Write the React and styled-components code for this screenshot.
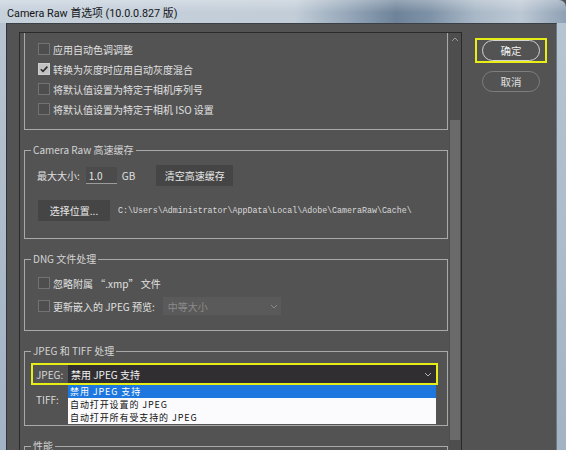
import React from "react";
import styled, { createGlobalStyle } from "styled-components";

const Global = createGlobalStyle`
  html, body { margin: 0; padding: 0; background: #535353; }
  body { width: 566px; height: 450px; overflow: hidden; }
  * { box-sizing: border-box; }
`;

const CJK = `"Noto Sans CJK SC", "Noto Sans", sans-serif`;

const Window = styled.div`
  width: 566px;
  height: 450px;
  display: flex;
  flex-direction: column;
  overflow: hidden;
  font-family: ${CJK};
  font-size: 10px;
  color: #dedede;
`;

const TitleBar = styled.div`
  height: 23px;
  flex: none;
  display: flex;
  align-items: center;
  padding-left: 7px;
  border-top-right-radius: 7px;
  background:
    linear-gradient(180deg, rgba(255,255,255,0.28) 0%, rgba(255,255,255,0) 55%),
    linear-gradient(90deg, #c6d1dc 0%, #c2cdd8 52%, #93a5b7 62%, #6e8399 70%, #7e92a7 76%, #a9b8c7 84%, #bcc8d4 92%, #8fa1b4 100%);
  font-family: Roboto, "Noto Sans CJK SC", sans-serif;
  font-size: 10.8px;
  color: #151515;
`;

const Frame = styled.div`
  flex: 1;
  min-height: 0;
  display: flex;
  padding: 0 9px 0 6px;
  background: linear-gradient(180deg, #b7c4d1 0%, #a3b3c4 100%);
`;

const Client = styled.div`
  flex: 1;
  display: flex;
  align-items: flex-start;
  overflow: hidden;
  background: #535353;
  border-top: 1px solid #3b4046;
  border-left: 1px solid #30353a;
  border-right: 1px solid #6c7a88;
  padding: 8px 0 0 12px;
`;

const ScrollPanel = styled.div`
  flex: none;
  width: 443px;
  height: 440px;
  display: flex;
  border: 1px solid #2a2a2a;
  background: #535353;
`;

const Viewport = styled.div`
  flex: 1;
  min-width: 0;
  overflow: hidden;
  padding: 0 1px 0 4px;
  display: flex;
  flex-direction: column;
`;

const Group = styled.fieldset`
  margin: ${(p) => (p.$cut ? "0" : "13px 0 0 0")};
  padding: 0;
  min-width: 0;
  border: 1px solid #a9a9a9;
  border-top: ${(p) => (p.$cut ? "none" : "1px solid #a9a9a9")};
`;

const Legend = styled.legend`
  margin-left: 6px;
  padding: 0 2px;
  font-size: 10px;
  line-height: 14px;
  color: #d4d4d4;
`;

const GroupBody = styled.div`
  padding: ${(p) => p.$pad};
  display: flex;
  flex-direction: column;
`;

const Row = styled.div`
  display: flex;
  align-items: center;
  height: ${(p) => p.$h || 20}px;
  margin-top: ${(p) => p.$mt || 0}px;
  flex: none;
`;

const Box = styled.span`
  width: 12px;
  height: 12px;
  flex: none;
  display: flex;
  align-items: center;
  justify-content: center;
  border: 1px solid ${(p) => (p.$checked ? "#cfcfcf" : "#737373")};
  background: ${(p) => (p.$checked ? "#c2c2c2" : "#4e4e4e")};
`;

const RowText = styled.span`
  margin-left: 3px;
  white-space: nowrap;
  color: #e0e0e0;
`;

const CheckRow = ({ checked, children, $mt }) => (
  <Row $mt={$mt}>
    <Box $checked={checked}>
      {checked && (
        <svg width="10" height="10" viewBox="0 0 10 10">
          <path d="M1.8 5.2 L4 7.4 L8.4 2.6" fill="none" stroke="#2a2a2a" strokeWidth="1.6" />
        </svg>
      )}
    </Box>
    <RowText>{children}</RowText>
  </Row>
);

const Label = styled.span`
  white-space: nowrap;
  color: ${(p) => p.$color || "#e0e0e0"};
  margin-left: ${(p) => p.$ml || 0}px;
`;

const SizeInput = styled.span`
  width: 31px;
  height: 17px;
  margin-left: 6px;
  display: flex;
  align-items: center;
  padding-left: 3px;
  background: #4b4b4b;
  border-bottom: 1px solid #9c9c9c;
  color: #e4e4e4;
`;

const FlatButton = styled.span`
  width: ${(p) => p.$w}px;
  height: 21px;
  margin-left: ${(p) => p.$ml || 0}px;
  flex: none;
  display: flex;
  align-items: center;
  justify-content: center;
  background: #454545;
  color: #e8e8e8;
  white-space: nowrap;
`;

const PathText = styled.span`
  margin-left: 8px;
  font-family: "Liberation Mono", monospace;
  font-size: 8.3px;
  color: #dadada;
  white-space: nowrap;
`;

const Chevron = ({ color }) => (
  <svg width="8" height="5" viewBox="0 0 8 5">
    <path d="M1 1 L4 4 L7 1" fill="none" stroke={color} strokeWidth="1" />
  </svg>
);

const DisabledSelect = styled.span`
  width: 118px;
  height: 18px;
  margin-left: 8px;
  display: flex;
  align-items: center;
  justify-content: space-between;
  padding: 0 3px 0 5px;
  background: #5a5a5a;
  color: #8a8a8a;
`;

const HighlightRow = styled.div`
  position: relative;
  display: flex;
  align-items: stretch;
  height: 22px;
  border: 2px solid #e6ee16;
`;

const JpegLabel = styled.span`
  width: 35px;
  flex: none;
  padding-left: 3px;
  display: flex;
  align-items: center;
  color: #d8d8d8;
`;

const DarkSelect = styled.div`
  position: relative;
  flex: 1;
  display: flex;
  align-items: center;
  justify-content: space-between;
  padding: 0 4px 0 3px;
  background: #302e30;
  color: #f2f2f2;
`;

const DropList = styled.ul`
  position: absolute;
  top: calc(100% + 2px);
  left: 0;
  right: 0;
  margin: 0;
  padding: 0;
  list-style: none;
  background: #fbfbfd;
  z-index: 2;
`;

const DropItem = styled.li`
  height: 13px;
  line-height: 13px;
  padding-left: 2px;
  font-size: 9px;
  letter-spacing: 0.9px;
  white-space: nowrap;
  overflow: hidden;
  color: ${(p) => (p.$sel ? "#ffffff" : "#111111")};
  background: ${(p) => (p.$sel ? "#1d77de" : "transparent")};
`;

const Scrollbar = styled.div`
  width: 12px;
  flex: none;
  display: flex;
  flex-direction: column;
  background: #4e4e4e;
`;

const ScrollArrow = styled.div`
  height: 12px;
  display: flex;
  align-items: center;
  justify-content: center;
`;

const Thumb = styled.div`
  margin: 75px 1px 0 1px;
  height: 320px;
  background: #6a6a6a;
`;

const ButtonColumn = styled.div`
  display: flex;
  flex-direction: column;
  align-items: flex-start;
  margin: 6px 0 0 13px;
`;

const Focus = styled.div`
  border: 2px solid #e6ee16;
  padding: 0 5px;
  height: 25px;
`;

const Capsule = styled.div`
  width: 58px;
  height: 21px;
  border-radius: 11px;
  border: 1px solid ${(p) => (p.$primary ? "#d4d4d4" : "#7e7e7e")};
  display: flex;
  align-items: center;
  justify-content: center;
  color: ${(p) => (p.$primary ? "#f0f0f0" : "#e0e0e0")};
  font-size: 10.5px;
  margin: ${(p) => p.$m || 0};
`;

export default function App() {
  return (
    <>
      <Global />
      <Window>
        <TitleBar>Camera Raw 首选项 (10.0.0.827 版)</TitleBar>
        <Frame>
          <Client>
            <ScrollPanel>
              <Viewport>
                <Group $cut>
                  <GroupBody $pad="6px 9px 10px 13px">
                    <CheckRow>应用自动色调调整</CheckRow>
                    <CheckRow checked>转换为灰度时应用自动灰度混合</CheckRow>
                    <CheckRow>将默认值设置为特定于相机序列号</CheckRow>
                    <CheckRow>将默认值设置为特定于相机 ISO 设置</CheckRow>
                  </GroupBody>
                </Group>

                <Group>
                  <Legend>Camera Raw 高速缓存</Legend>
                  <GroupBody $pad="8px 9px 17px 12px">
                    <Row $h={21}>
                      <Label>最大大小:</Label>
                      <SizeInput>1.0</SizeInput>
                      <Label $ml={5}>GB</Label>
                      <FlatButton $w={77} $ml={21}>清空高速缓存</FlatButton>
                    </Row>
                    <Row $h={21} $mt={14}>
                      <FlatButton $w={72} $ml={1}>选择位置...</FlatButton>
                      <PathText>C:\Users\Administrator\AppData\Local\Adobe\CameraRaw\Cache\</PathText>
                    </Row>
                  </GroupBody>
                </Group>

                <Group>
                  <Legend>DNG 文件处理</Legend>
                  <GroupBody $pad="7px 9px 14px 13px">
                    <CheckRow>忽略附属 “.xmp” 文件</CheckRow>
                    <Row $mt={3}>
                      <Box />
                      <RowText>更新嵌入的 JPEG 预览:</RowText>
                      <DisabledSelect>
                        <span>中等大小</span>
                        <Chevron color="#8a8a8a" />
                      </DisabledSelect>
                    </Row>
                  </GroupBody>
                </Group>

                <Group>
                  <Legend>JPEG 和 TIFF 处理</Legend>
                  <GroupBody $pad="5px 9px 17px 6px">
                    <HighlightRow>
                      <JpegLabel>JPEG:</JpegLabel>
                      <DarkSelect>
                        <span>禁用 JPEG 支持</span>
                        <Chevron color="#b0b0b0" />
                        <DropList>
                          <DropItem $sel>禁用 JPEG 支持</DropItem>
                          <DropItem>自动打开设置的 JPEG</DropItem>
                          <DropItem>自动打开所有受支持的 JPEG</DropItem>
                        </DropList>
                      </DarkSelect>
                    </HighlightRow>
                    <Row $h={18} $mt={5}>
                      <Label $ml={5} $color="#d8d8d8">TIFF:</Label>
                    </Row>
                  </GroupBody>
                </Group>

                <Group>
                  <Legend>性能</Legend>
                  <GroupBody $pad="8px 9px 17px 13px">
                    <Row $h={20} />
                  </GroupBody>
                </Group>
              </Viewport>
              <Scrollbar>
                <ScrollArrow>
                  <svg width="8" height="5" viewBox="0 0 8 5">
                    <path d="M1 4 L4 1 L7 4" fill="none" stroke="#9a9a9a" strokeWidth="1" />
                  </svg>
                </ScrollArrow>
                <Thumb />
              </Scrollbar>
            </ScrollPanel>
            <ButtonColumn>
              <Focus>
                <Capsule $primary>确定</Capsule>
              </Focus>
              <Capsule $m="8px 0 0 7px">取消</Capsule>
            </ButtonColumn>
          </Client>
        </Frame>
      </Window>
    </>
  );
}
